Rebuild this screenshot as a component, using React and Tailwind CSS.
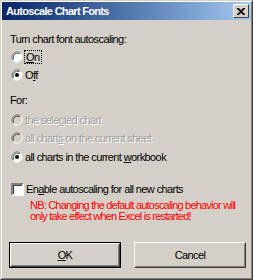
import React from 'react';

const font = { fontFamily: '"Liberation Sans", Arial, sans-serif' };

function Radio({ checked, disabled }) {
  return (
    <svg width="12" height="12" viewBox="0 0 12 12" className="shrink-0">
      <circle cx="6" cy="6" r="5" fill={disabled ? '#d4d0c8' : '#ffffff'} />
      <path d="M1.5 9 A5.5 5.5 0 0 1 9 1.5" stroke="#808080" strokeWidth="1" fill="none" />
      <path d="M2.5 8.5 A4.5 4.5 0 0 1 8.5 2.5" stroke="#404040" strokeWidth="1" fill="none" />
      <path d="M10.5 3 A5.5 5.5 0 0 1 3 10.5" stroke="#ffffff" strokeWidth="1" fill="none" />
      {checked && <circle cx="6" cy="6" r="2" fill="#000" />}
    </svg>
  );
}

function RadioRow({ checked, disabled, children, className = '' }) {
  return (
    <div className={`h-[18px] flex items-center gap-[2px] pl-[2px] ${className}`}>
      <Radio checked={checked} disabled={disabled} />
      <span
        className={disabled ? 'text-[#a0a0a0] [text-shadow:1px_1px_0_#ffffff]' : 'text-black'}
      >
        {children}
      </span>
    </div>
  );
}

export default function App() {
  return (
    <div style={font} className="w-[253px] h-[280px] text-[11px] leading-[13px] tracking-[-0.6px] whitespace-nowrap bg-[#d4d0c8] overflow-hidden">
      <div className="w-full h-full border border-t-[#d4d0c8] border-l-[#d4d0c8] border-r-[#404040] border-b-[#404040]">
        <div className="w-full h-full border border-t-white border-l-white border-r-[#808080] border-b-[#808080] flex flex-col">
          {/* title bar */}
          <div className="h-[18px] flex items-center justify-between pl-[4px] pr-[2px] bg-gradient-to-r from-[#0a246a] to-[#a6caf0]">
            <span className="text-white font-bold text-[11px] tracking-[-0.7px]">Autoscale Chart Fonts</span>
            <div className="w-[16px] h-[14px] bg-[#d4d0c8] border border-t-white border-l-white border-r-[#404040] border-b-[#404040] flex items-center justify-center">
              <svg width="8" height="7" viewBox="0 0 8 7">
                <path d="M0 0 L7 7 M1 0 L8 7 M7 0 L0 7 M8 0 L1 7" stroke="#000" strokeWidth="1.2" />
              </svg>
            </div>
          </div>

          <div className="flex flex-col pl-[7px]">
            <div className="mt-[13px] h-[13px] pl-[1px]">Turn chart font autoscaling:</div>
            <div className="mt-[2px] h-[18px] flex items-center gap-[1px] pl-[2px]">
              <Radio checked={false} />
              <span className="border border-dotted border-black px-[1px] leading-[12px]">
                <u>O</u>n
              </span>
            </div>
            <RadioRow checked>
              O<u>f</u>f
            </RadioRow>

            <div className="mt-[10px] h-[13px] pl-[1px]">For:</div>
            <RadioRow disabled className="mt-[4px]">
              the sele<u>c</u>ted chart
            </RadioRow>
            <RadioRow disabled>
              all chart<u>s</u> on the current sheet
            </RadioRow>
            <RadioRow checked className="mt-[1px]">
              all charts in the current <u>w</u>orkbook
            </RadioRow>

            <div className="mt-[14px] h-[18px] flex items-center gap-[2px] pl-[2px]">
              <div className="w-[13px] h-[13px] bg-white border-[2px] border-t-[#808080] border-l-[#808080] border-r-white border-b-white shadow-[inset_1px_1px_0_#404040]" />
              <span>
                En<u>a</u>ble autoscaling for all new charts
              </span>
            </div>

            <div className="mt-[2px] pl-[21px] text-[#ff0000] leading-[11px] tracking-[-0.8px]">
              NB: Changing the default autoscaling behavior will
              <br />
              only take effect when Excel is restarted!
            </div>
          </div>

          <div className="mt-[20px] flex gap-[13px] pl-[7px]">
            <div className="w-[112px] h-[26px] border border-black">
              <div className="w-full h-full border border-t-white border-l-white border-r-[#404040] border-b-[#404040] flex items-center justify-center">
                <div className="w-full h-full border border-t-[#d4d0c8] border-l-[#d4d0c8] border-r-[#808080] border-b-[#808080] flex items-center justify-center">
                  <span>
                    <u>O</u>K
                  </span>
                </div>
              </div>
            </div>
            <div className="w-[112px] h-[26px] border border-t-white border-l-white border-r-[#404040] border-b-[#404040]">
              <div className="w-full h-full border border-t-[#d4d0c8] border-l-[#d4d0c8] border-r-[#808080] border-b-[#808080] flex items-center justify-center">
                Cancel
              </div>
            </div>
          </div>
        </div>
      </div>
    </div>
  );
}
